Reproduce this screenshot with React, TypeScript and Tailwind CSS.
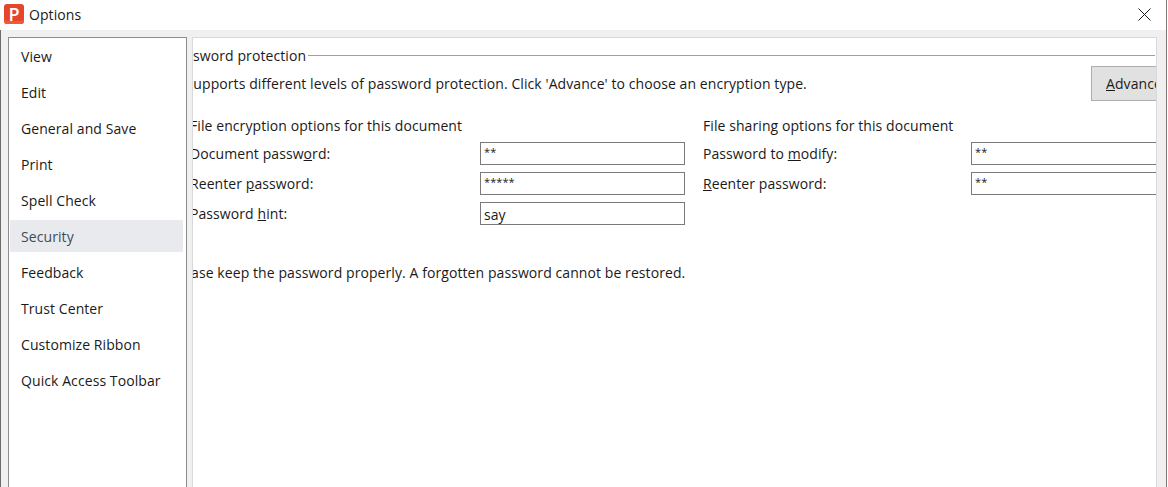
const font = "font-['Open_Sans','Noto_Sans',sans-serif]";

const navItems = ['View', 'Edit', 'General and Save', 'Print', 'Spell Check', 'Security', 'Feedback', 'Trust Center', 'Customize Ribbon', 'Quick Access Toolbar'];

const FieldRow = ({ label, value, inputWidth }: { label: React.ReactNode; value: string; inputWidth: string }) => (
    <div className="flex h-[23px] items-center justify-between">
        <span className="whitespace-nowrap">{label}</span>
        <div className={`flex h-[23px] shrink-0 items-center border border-[#7a7a7a] bg-white pl-[3px] ${inputWidth}`}>
            {value.startsWith('*') ? <span className="-mt-[2px] text-[11px]">{value}</span> : <span className="mt-px">{value}</span>}
        </div>
    </div>
);

export default function App() {
    return (
        <div className="h-[487px] w-[1168px] overflow-hidden bg-white pr-px">
            <div className={`flex h-full flex-col border-r border-r-[#7d7672] text-[14px] tracking-[0.08px] text-[#1a1a1a] ${font}`}>
                <div className="flex h-[30px] shrink-0 items-center bg-white pb-[2px] pl-1 pr-[15px]">
                    <div className="flex h-5 w-5 items-end justify-center rounded-[3px] bg-[#e5452b] text-[18px] font-semibold leading-[19px] text-white shadow-[inset_0_-3px_0_#ee5a3c]">P</div>
                    <span className="ml-[5px] flex-1">Options</span>
                    <svg width="13" height="13" viewBox="0 0 13 13" stroke="#1a1a1a" fill="none">
                        <path d="M.5.5l12 12M12.5.5l-12 12" />
                    </svg>
                </div>
                <div className="flex min-h-0 flex-1 gap-[5px] border-l border-l-[#6b6b6b] bg-[#f0f0f0] pl-[7px] pr-[9px] pt-[7px]">
                    <div className="w-[179px] shrink-0 border border-b-0 border-[#8c8c8c] bg-white pl-px pr-[3px] pt-[2px]">
                        <div className="flex flex-col gap-1">
                            {navItems.map((item) => (
                                <div key={item} className={`flex h-8 items-center pl-[11px] ${item === 'Security' ? 'bg-[#e8eaed] text-[#3f4a5a]' : ''}`}>
                                    {item}
                                </div>
                            ))}
                        </div>
                    </div>
                    <div className="min-w-0 flex-1 overflow-hidden border-x border-t border-[#d9d9d9] bg-white pr-px">
                        <div className="-ml-[23px] mt-[7px] flex h-5 items-center">
                            <span className="whitespace-nowrap">Password protection</span>
                            <div className="ml-[2px] h-px flex-1 bg-[#a0a0a0]" />
                        </div>
                        <div className="mt-[1px] flex h-[35px] items-center justify-between">
                            <span className="-ml-[82px] whitespace-nowrap">WPS Office supports different levels of password protection. Click 'Advance' to choose an encryption type.</span>
                            <div className="-mr-[41px] flex h-[35px] w-[105px] shrink-0 items-center border border-[#adadad] bg-[#e1e1e1] pl-[14px]">
                                <span><u>A</u>dvanced</span>
                            </div>
                        </div>
                        <div className="mt-[14px] flex">
                            <div className="-ml-[3px] w-[495px] shrink-0">
                                <div className="flex h-5 items-center">File encryption options for this document</div>
                                <div className="mt-[7px] flex flex-col gap-[7px]">
                                    <FieldRow label={<>Document passw<u>o</u>rd:</>} value="**" inputWidth="w-[205px]" />
                                    <FieldRow label={<>Reenter <u>p</u>assword:</>} value="*****" inputWidth="w-[205px]" />
                                    <FieldRow label={<>Password <u>h</u>int:</>} value="say" inputWidth="w-[205px]" />
                                </div>
                            </div>
                            <div className="ml-[18px] w-[513px] shrink-0">
                                <div className="flex h-5 items-center">File sharing options for this document</div>
                                <div className="mt-[7px] flex flex-col gap-[7px]">
                                    <FieldRow label={<>Password to <u>m</u>odify:</>} value="**" inputWidth="w-[245px]" />
                                    <FieldRow label={<><u>R</u>eenter password:</>} value="**" inputWidth="w-[245px]" />
                                </div>
                            </div>
                        </div>
                        <div className="-ml-[22px] mt-[37px] whitespace-nowrap">Please keep the password properly. A forgotten password cannot be restored.</div>
                    </div>
                </div>
            </div>
        </div>
    );
}
